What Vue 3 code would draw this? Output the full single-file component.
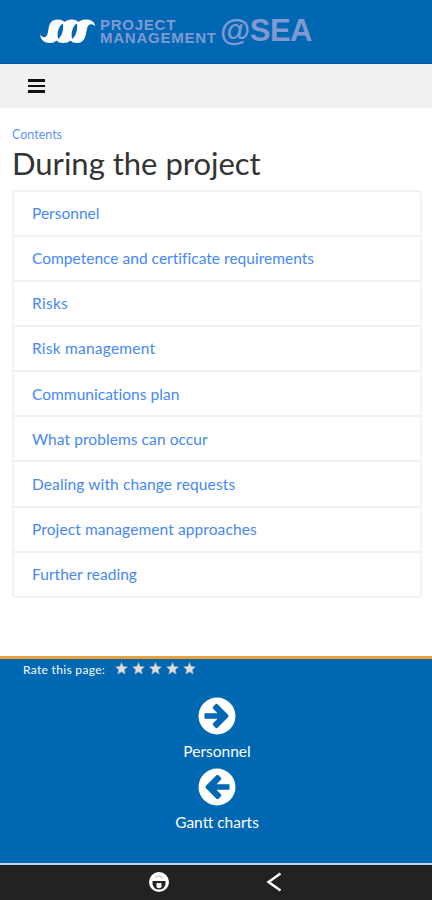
<script setup>
const topics = [
  { title: 'Personnel', tracking: 0.02 },
  { title: 'Competence and certificate requirements', tracking: 0.02 },
  { title: 'Risks', tracking: 0.3 },
  { title: 'Risk management', tracking: 0.23 },
  { title: 'Communications plan', tracking: 0.04 },
  { title: 'What problems can occur', tracking: 0.08 },
  { title: 'Dealing with change requests', tracking: 0.12 },
  { title: 'Project management approaches', tracking: 0.1 },
  { title: 'Further reading', tracking: 0.03 },
]
</script>

<template>
  <div class="page">
    <header class="brand">
      <svg class="logo" width="56" height="26" viewBox="0 0 56 26" aria-hidden="true">
        <path fill="#fff" d="M0 16.500C3 20.500 7 20.500 8 14C9 7 10 1.500 18 1.500Q22.500 1.500 24.500 4Q27 1.500 32 1.500Q36.500 1.500 38.500 4Q41 1.500 46 1.500C51.500 1.500 54.500 4 55.500 8.500C52 5 47.800 5.500 46.700 12C45.500 19.500 44 25 37 25Q32.500 25 30.500 22.500Q28 25 23.500 25Q18.500 25 16.500 22.500Q14 25 10 25C4 25 1 22 0 16.500Z" />
        <g fill="#0067b3">
          <path d="M22.800 5.500C24 9 22.500 18 18.200 21C16.700 17 18 8 22.800 5.500Z" />
          <path d="M36.800 5.500C38 9 36.500 18 32.200 21C30.700 17 32 8 36.800 5.500Z" />
        </g>
      </svg>
      <div class="brand-lines"><span>PROJECT</span><span>MANAGEMENT</span></div>
      <div class="brand-sea">@SEA</div>
    </header>
    <nav class="toolbar">
      <button class="menu" aria-label="Menu"><i></i><i></i><i></i></button>
    </nav>
    <main class="content">
      <a class="crumb">Contents</a>
      <h1>During the project</h1>
      <ul class="topics">
        <li v-for="topic in topics" :key="topic.title">
          <a :style="{ letterSpacing: topic.tracking + 'px' }">{{ topic.title }}</a>
        </li>
      </ul>
    </main>
    <footer class="footer">
      <div class="rating">
        <span class="rating-label">Rate this page:</span>
        <span class="stars">
          <svg v-for="n in 5" :key="n" width="13" height="13" viewBox="0 0 13 13">
            <path d="M6.500 .7L8.100 4.600L12.300 4.900L9.100 7.700L10.100 11.900L6.500 9.700L2.900 11.900L3.900 7.700L.7 4.900L4.900 4.600Z" fill="#dededb" stroke="#b5bab9" stroke-width=".7" />
          </svg>
        </span>
      </div>
      <a class="step">
        <svg width="38" height="38" viewBox="0 0 38 38">
          <circle cx="19" cy="19" r="18.500" fill="#fff" />
          <path d="M6.500 16.200H19.500L15.300 12Q14 10.700 15.300 9.400L17.200 7.500Q18.500 6.200 19.800 7.500L30 17.700Q31.300 19 30 20.300L19.800 30.500Q18.500 31.800 17.200 30.500L15.300 28.600Q14 27.300 15.300 26L19.500 21.800H6.500Z" fill="#0067b3" />
        </svg>
        <span>Personnel</span>
      </a>
      <a class="step">
        <svg width="38" height="38" viewBox="0 0 38 38">
          <circle cx="19" cy="19" r="18.500" fill="#fff" />
          <path transform="matrix(-1 0 0 1 38 0)" d="M6.500 16.200H19.500L15.300 12Q14 10.700 15.300 9.400L17.200 7.500Q18.500 6.200 19.800 7.500L30 17.700Q31.300 19 30 20.300L19.800 30.500Q18.500 31.800 17.200 30.500L15.300 28.600Q14 27.300 15.300 26L19.500 21.800H6.500Z" fill="#0067b3" />
        </svg>
        <span>Gantt charts</span>
      </a>
    </footer>
    <div class="system">
      <svg class="face" width="22" height="22" viewBox="0 0 22 22">
        <circle cx="11" cy="11" r="10" fill="#fff" />
        <path d="M7.500 6.500Q10 3.500 11.500 5.500Q14 5 14.500 7.500" fill="none" stroke="#aaa" stroke-width="1" />
        <path d="M4.500 10H17.500V13Q16.500 18.500 11 18.500Q5.500 18.500 4.500 13Z" fill="#222" />
        <path d="M8.500 12.500Q9.800 10.800 11 12.500Q12.200 10.800 13.500 12.500V16Q11 18.500 8.500 16Z" fill="#fff" />
      </svg>
      <svg class="back" width="16" height="20" viewBox="0 0 16 20">
        <path d="M14.500 1.500L2.500 10L14.500 18.500" fill="none" stroke="#fff" stroke-width="2.400" />
      </svg>
    </div>
  </div>
</template>

<style>
body { margin: 0; background: #fff; }
</style>

<style scoped>
* { box-sizing: border-box; }
.page { width: 432px; height: 900px; display: flex; flex-direction: column; overflow: hidden; background: #fff; font-family: Lato, "Noto Sans", sans-serif; }
.brand { height: 64px; flex: none; display: flex; align-items: flex-start; padding: 18px 0 0 40px; background: #0067b3; border-bottom: 1px solid #0059a8; color: #8198d2; font-family: "Liberation Sans", sans-serif; font-weight: 700; }
.logo { flex: none; }
.brand-lines { display: flex; flex-direction: column; width: 120px; margin-left: 4px; font-size: 15px; line-height: 13px; letter-spacing: .75px; font-weight: 700; }
.brand-sea { font-size: 31px; line-height: 26px; letter-spacing: -.5px; }
.toolbar { height: 44px; flex: none; background: #f1f1f1; padding: 15px 0 0 28px; }
.menu { display: flex; flex-direction: column; gap: 3px; width: 17px; padding: 0; border: 0; background: none; }
.menu i { height: 2.500px; width: 17px; background: #111; }
.content { height: 548px; flex: none; padding: 18px 10px 0 12px; }
.crumb { display: block; height: 17px; font-size: 12.500px; line-height: 17px; color: #5c95fa; }
h1 { margin: 0; height: 47px; font-size: 31px; line-height: 40px; font-weight: 400; color: #333; white-space: nowrap; }
.topics { list-style: none; margin: 0; padding: 0; height: 408px; display: grid; grid-template-rows: 42.500px repeat(8, 1fr); border: 2px solid #f3f3f3; border-radius: 4px; }
.topics li { display: flex; align-items: center; padding: 0 0 1px 18px; font-size: 15.500px; color: #4688f5; white-space: nowrap; }
.topics li + li { border-top: 2px solid #f1f1f1; padding-bottom: 0; }
.footer { height: 207px; flex: none; display: flex; flex-direction: column; align-items: center; background: #0067b3; border-top: 3px solid #ef9d35; color: #fff; }
.rating { align-self: stretch; display: flex; height: 38px; padding: 3px 0 0 23px; }
.rating-label { width: 92px; font-size: 12px; line-height: 15px; letter-spacing: .32px; white-space: nowrap; }
.stars { display: flex; gap: 4px; }
.step { display: flex; flex-direction: column; align-items: center; width: 140px; height: 70.500px; margin-left: 2px; }
.step svg { flex: none; }
.step span { margin-top: 5px; font-size: 15.500px; line-height: 22px; }
.system { height: 37px; flex: none; display: flex; align-items: center; background: #222; border-top: 2px solid #c3d8e4; padding: 0 0 2px 148px; }
.back { margin-left: 96px; }
</style>
